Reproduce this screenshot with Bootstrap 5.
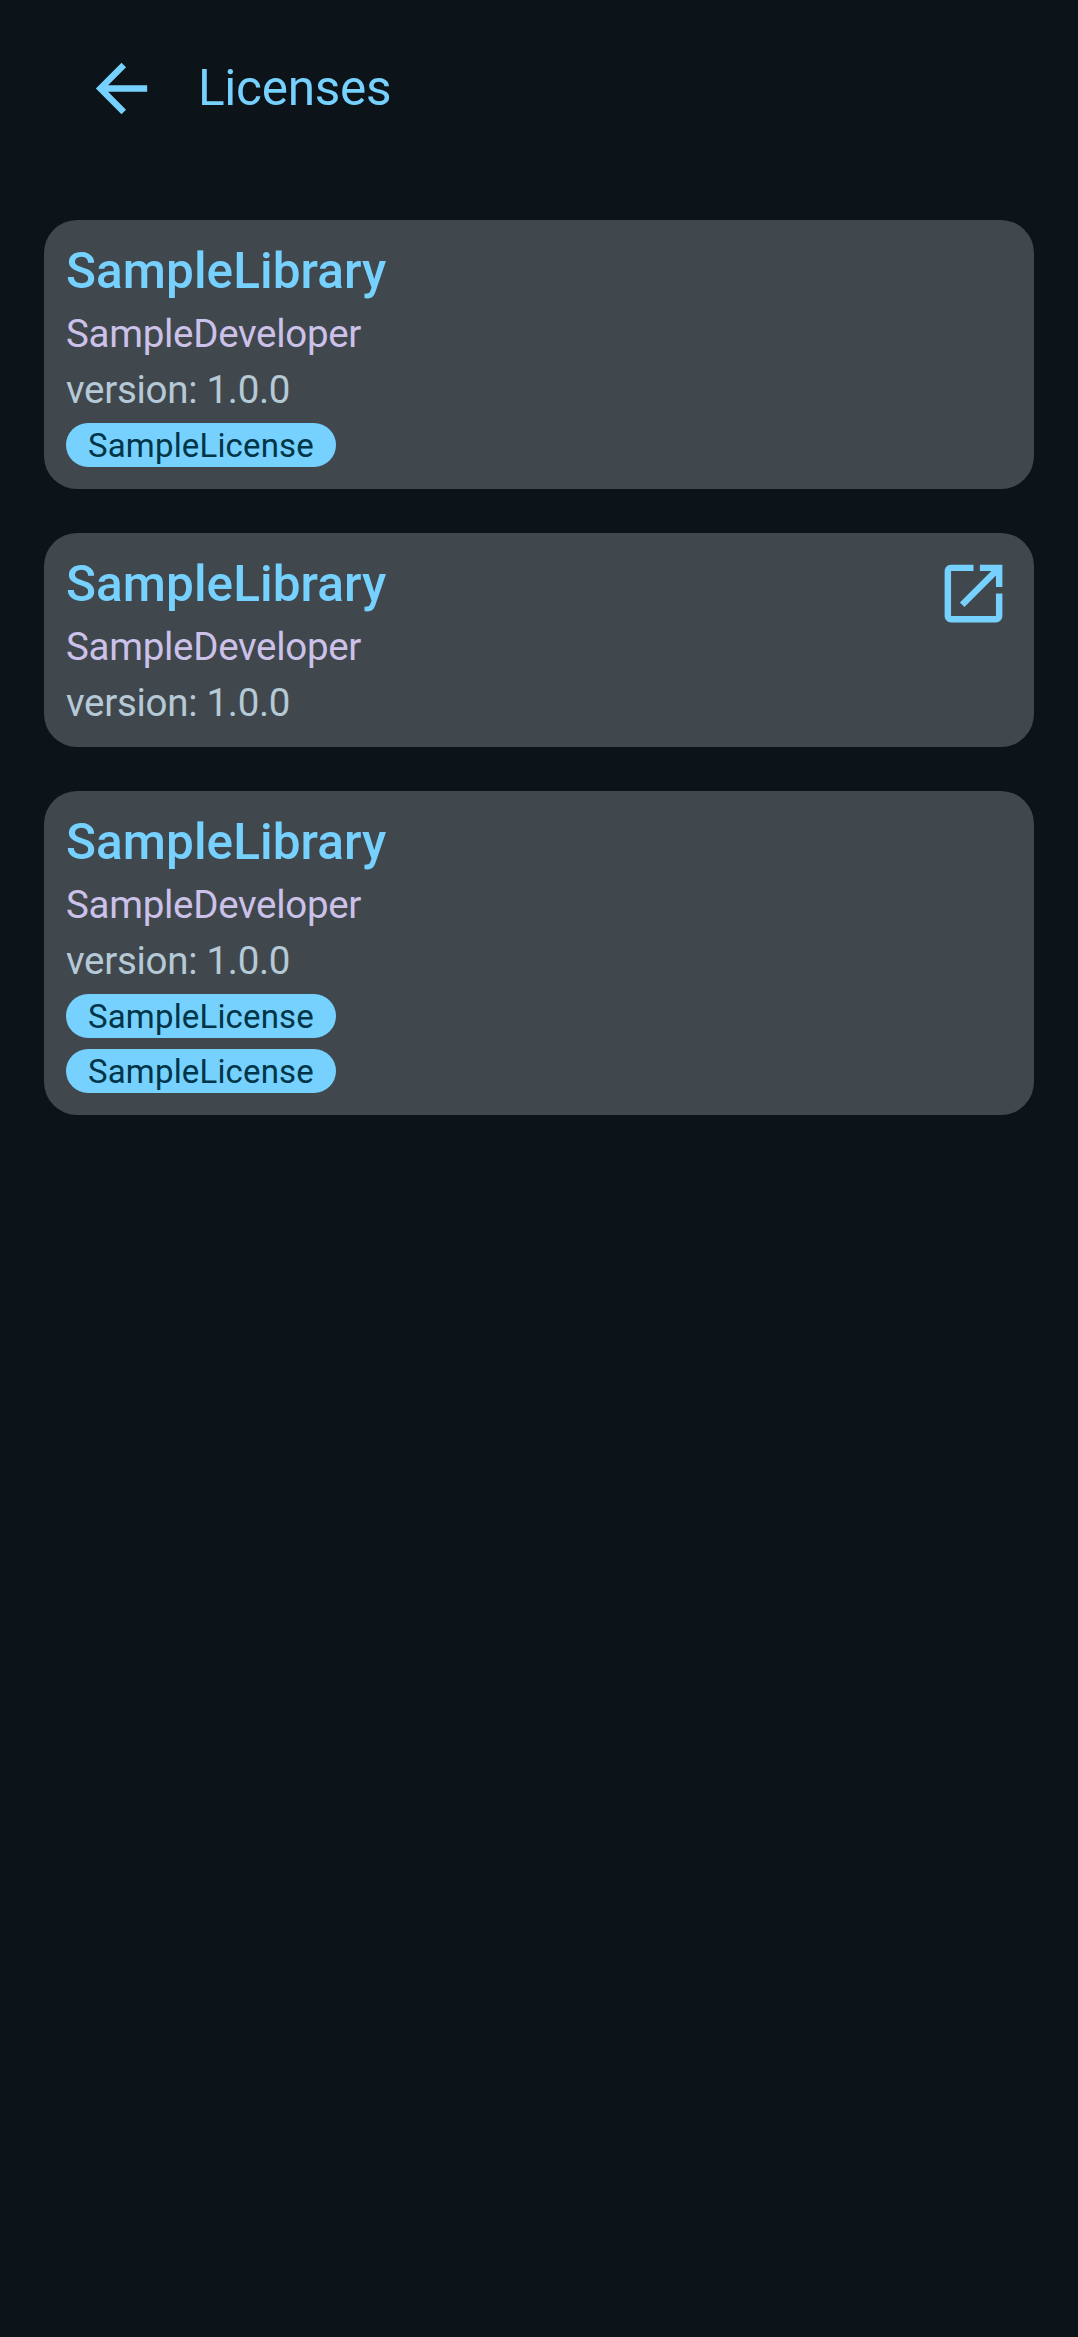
<!DOCTYPE html>
<html lang="en">
<head>
<meta charset="utf-8">
<meta name="viewport" content="width=device-width, initial-scale=1">
<title>Licenses</title>
<link href="https://cdn.jsdelivr.net/npm/bootstrap@5.3.0/dist/css/bootstrap.min.css" rel="stylesheet">
<style>
  body { background: #0c1419; color: #76d1ff; font-family: Roboto, sans-serif; line-height: normal; min-height: 100vh; }
  .top-bar { height: 176px; padding: 0 83px; gap: 38px; }
  .top-bar h1 { font-size: 49.5px; line-height: 58px; font-weight: 400; letter-spacing: -.3px; }
  .glyph { width: 77px; height: 77px; fill: #76d1ff; display: block; flex: none; }
  .license-list { padding: 44px; gap: 44px; }
  .lib-card { background: #41484d; border: 0; border-radius: 33px; padding: 22px; }
  .lib-info { gap: 11px; }
  .lib-name { font-size: 49.5px; line-height: 58px; font-weight: 500; color: #76d1ff; letter-spacing: .08px; }
  .lib-dev, .lib-version { font-size: 38.5px; line-height: 45px; letter-spacing: -.3px; }
  .lib-dev { color: #cbc1e9; }
  .lib-version { color: #b5c9d7; }
  .lib-chip { background: #76d1ff; color: #003548; font-size: 33px; line-height: 42px; width: 270px; height: 44px; padding: 2px 0 0 22px; letter-spacing: .16px; }
</style>
<script src="https://cdn.jsdelivr.net/npm/bootstrap@5.3.0/dist/js/bootstrap.bundle.min.js"></script>
</head>
<body>
<header class="top-bar d-flex align-items-center">
  <svg class="glyph" viewBox="0 0 24 24" role="img" aria-label="Back"><path d="M20 11H7.83l5.59-5.59L12 4l-8 8 8 8 1.41-1.41L7.83 13H20v-2z"/></svg>
  <h1 class="m-0">Licenses</h1>
</header>
<main class="license-list d-flex flex-column">
  <article class="card lib-card flex-row justify-content-between align-items-start">
    <div class="lib-info d-flex flex-column align-items-start">
      <h2 class="lib-name m-0">SampleLibrary</h2>
      <div class="lib-dev">SampleDeveloper</div>
      <div class="lib-version">version: 1.0.0</div>
      <span class="lib-chip rounded-pill">SampleLicense</span>
    </div>
  </article>
  <article class="card lib-card flex-row justify-content-between align-items-start">
    <div class="lib-info d-flex flex-column align-items-start">
      <h2 class="lib-name m-0">SampleLibrary</h2>
      <div class="lib-dev">SampleDeveloper</div>
      <div class="lib-version">version: 1.0.0</div>
    </div>
    <svg class="glyph" viewBox="0 0 24 24" role="img" aria-label="Open"><path d="M19 19H5V5h7V3H5c-1.11 0-2 .9-2 2v14c0 1.1.89 2 2 2h14c1.1 0 2-.9 2-2v-7h-2v7zM14 3v2h3.59l-9.83 9.83 1.41 1.41L19 6.41V10h2V3h-7z"/></svg>
  </article>
  <article class="card lib-card flex-row justify-content-between align-items-start">
    <div class="lib-info d-flex flex-column align-items-start">
      <h2 class="lib-name m-0">SampleLibrary</h2>
      <div class="lib-dev">SampleDeveloper</div>
      <div class="lib-version">version: 1.0.0</div>
      <span class="lib-chip rounded-pill">SampleLicense</span>
      <span class="lib-chip rounded-pill">SampleLicense</span>
    </div>
  </article>
</main>
</body>
</html>
